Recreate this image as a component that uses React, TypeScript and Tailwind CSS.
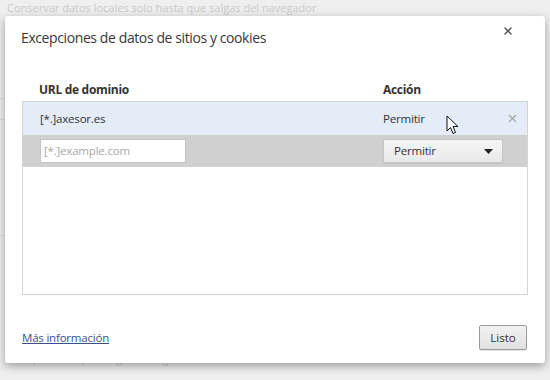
import { X } from "lucide-react";

const FONT = "font-['Open_Sans','Noto_Sans',sans-serif]";

function BackgroundPage() {
  return (
    <div className="flex h-[380px] flex-col bg-[#efefef] text-[11px] text-[#c9c9c9]">
      <p className="pl-[7px] pt-[1px] leading-[13px]">Conservar datos locales solo hasta que salgas del navegador</p>
      <div className="mt-[84px] h-[22px] w-[20px] border-y border-r border-[#dcdcdc]" />
      <div className="mt-[115px] h-px w-[20px] bg-[#dcdcdc]" />
      <p className="mt-[116px] pl-[15px] leading-[13px]">No permitir que ningún sitio guarde datos</p>
    </div>
  );
}

function Cursor() {
  return (
    <svg className="absolute left-[446px] top-[115px]" width="13" height="20" viewBox="0 0 13 20">
      <path d="M1 1 L1 16 L4.5 12.5 L7 18.5 L9.5 17.5 L7 11.5 L12 11.5 Z" fill="#fff" stroke="#111" strokeWidth="1" strokeLinejoin="round" />
    </svg>
  );
}

function ExceptionsList() {
  return (
    <div className="mx-[17px] flex flex-col">
      <div className="flex h-[23px] items-center text-[12px] font-bold tracking-[-0.3px] text-[#333]">
        <span className="w-[361px] pl-[17px]">URL de dominio</span>
        <span>Acción</span>
      </div>
      <div className="flex h-[194px] flex-col border border-[#d4d4d4]">
        <div className="flex h-[33px] shrink-0 items-center bg-[#e4ecf7] text-[11.5px] tracking-[-0.2px] text-[#333]">
          <span className="w-[360px] pl-[17px]">[*.]axesor.es</span>
          <span className="flex-1">Permitir</span>
          <X className="mr-[8px] h-[13px] w-[13px] text-[#a4a4a4]" strokeWidth={2} />
        </div>
        <div className="flex h-[32px] shrink-0 items-center bg-[#d0d0d0] text-[11.5px] tracking-[-0.2px]">
          <div className="ml-[17px] flex h-[24px] w-[146px] items-center border border-[#c4c4c4] bg-white pl-[3px] text-[#a8a8a8]">
            [*.]example.com
          </div>
          <div className="ml-[197px] flex h-[24px] w-[120px] items-center justify-between rounded-[2px] border border-[#c6c6c6] bg-gradient-to-b from-[#f5f5f5] to-[#e9e9e9] pl-[10px] pr-[9px] text-[#333] shadow-[0_1px_1px_rgba(0,0,0,0.08)]">
            <span>Permitir</span>
            <svg width="9" height="5" viewBox="0 0 9 5">
              <path d="M0 0 H9 L4.5 5 Z" fill="#222" />
            </svg>
          </div>
        </div>
        <div className="flex-1 bg-white" />
      </div>
    </div>
  );
}

export default function App() {
  return (
    <div className={`relative h-[380px] w-[550px] overflow-hidden ${FONT}`}>
      <BackgroundPage />
      <div className="absolute left-[5px] top-[16px] flex h-[347px] w-[540px] flex-col rounded-[3px] bg-white shadow-[0_3px_10px_rgba(0,0,0,0.35)]">
        <div className="flex items-start justify-between pl-[16px] pr-[31px] pt-[12px]">
          <h1 className="text-[14px] leading-[20px] tracking-[-0.4px] text-[#383838]">Excepciones de datos de sitios y cookies</h1>
          <X className="mt-[-3px] h-[12px] w-[12px] text-[#555]" strokeWidth={3} />
        </div>
        <div className="mt-[30px]">
          <ExceptionsList />
        </div>
        <div className="mt-auto flex items-center justify-between pb-[13px] pl-[17px] pr-[18px]">
          <a href="#" className="text-[11.5px] tracking-[-0.2px] text-[#3b4f8f] underline">
            Más información
          </a>
          <button className="h-[25px] w-[48px] rounded-[2px] border border-[#9b9b9b] bg-gradient-to-b from-[#f2f2f2] to-[#e1e1e1] text-[11.5px] text-[#333] shadow-[0_1px_1px_rgba(0,0,0,0.1)]">
            Listo
          </button>
        </div>
      </div>
      <Cursor />
    </div>
  );
}
